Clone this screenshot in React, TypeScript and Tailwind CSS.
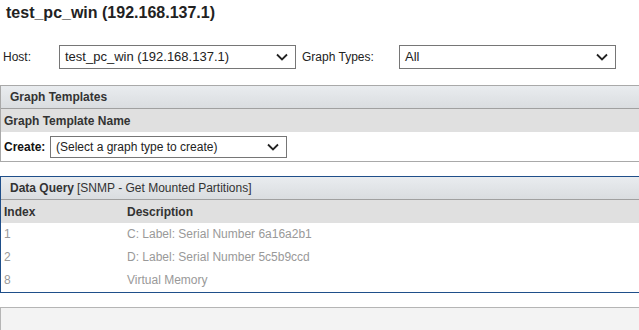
import React from "react";

function Chevron() {
  return (
    <svg width="12" height="8" viewBox="0 0 12 8" className="shrink-0">
      <path d="M1 1.5 L6 6.5 L11 1.5" fill="none" stroke="#222" strokeWidth="1.8" />
    </svg>
  );
}

function FakeSelect({ value, className }: { value: string; className: string }) {
  return (
    <div
      className={`flex items-center justify-between border border-[#767676] bg-white pl-[5px] pr-[7px] text-[#222] ${className}`}
    >
      <span>{value}</span>
      <Chevron />
    </div>
  );
}

export default function App() {
  const rows = [
    { index: "1", desc: "C: Label: Serial Number 6a16a2b1" },
    { index: "2", desc: "D: Label: Serial Number 5c5b9ccd" },
    { index: "8", desc: "Virtual Memory" },
  ];

  return (
    <div className="w-[639px] h-[330px] overflow-hidden bg-white font-['Liberation_Sans',Arial,sans-serif] text-[12px] text-[#333]">
      <div className="pl-[6px] pt-[3px] text-[16px] font-bold text-[#222] leading-[20px]">
        test_pc_win (192.168.137.1)
      </div>

      <div className="mt-[22px] flex items-center h-[24px]">
        <span className="w-[59px] pl-[3px] text-[#222]">Host:</span>
        <FakeSelect value="test_pc_win (192.168.137.1)" className="w-[237px] h-[24px] text-[13px]" />
        <span className="ml-[6px] w-[97px] text-[#222]">Graph Types:</span>
        <FakeSelect value="All" className="w-[217px] h-[24px] text-[13px]" />
      </div>

      <div className="mt-[16px] w-[660px] border border-[#a9a9a9]">
        <div className="h-[23px] flex items-center pl-[9px] font-bold bg-gradient-to-b from-[#e9ecef] to-[#dadde0] border-b border-[#a0a0a0]">
          Graph Templates
        </div>
        <div className="h-[23px] flex items-center pl-[3px] font-bold bg-[#e0e0e0]">
          Graph Template Name
        </div>
        <div className="h-[29px] flex items-center pl-[3px]">
          <span className="w-[46px] font-bold text-[#111]">Create:</span>
          <FakeSelect value="(Select a graph type to create)" className="w-[237px] h-[22px] text-[12px]" />
        </div>
      </div>

      <div className="mt-[14px] w-[660px] border border-[#1f4f8a]">
        <div className="h-[23px] flex items-center pl-[9px] bg-gradient-to-b from-[#e9ecef] to-[#dadde0] border-b border-[#a0a0a0]">
          <span className="font-bold">Data Query</span>
          <span className="ml-[3px]">[SNMP - Get Mounted Partitions]</span>
        </div>
        <div className="h-[23px] flex items-center pl-[3px] font-bold bg-[#e0e0e0]">
          <span className="w-[123px]">Index</span>
          <span>Description</span>
        </div>
        {rows.map((r) => (
          <div key={r.index} className="h-[23px] flex items-center pl-[3px] pb-[1px] text-[#999]">
            <span className="w-[123px]">{r.index}</span>
            <span>{r.desc}</span>
          </div>
        ))}
      </div>

      <div className="mt-[14px] w-[660px] h-[40px] border border-[#b5b5b5] bg-[#f3f3f3]" />
    </div>
  );
}
